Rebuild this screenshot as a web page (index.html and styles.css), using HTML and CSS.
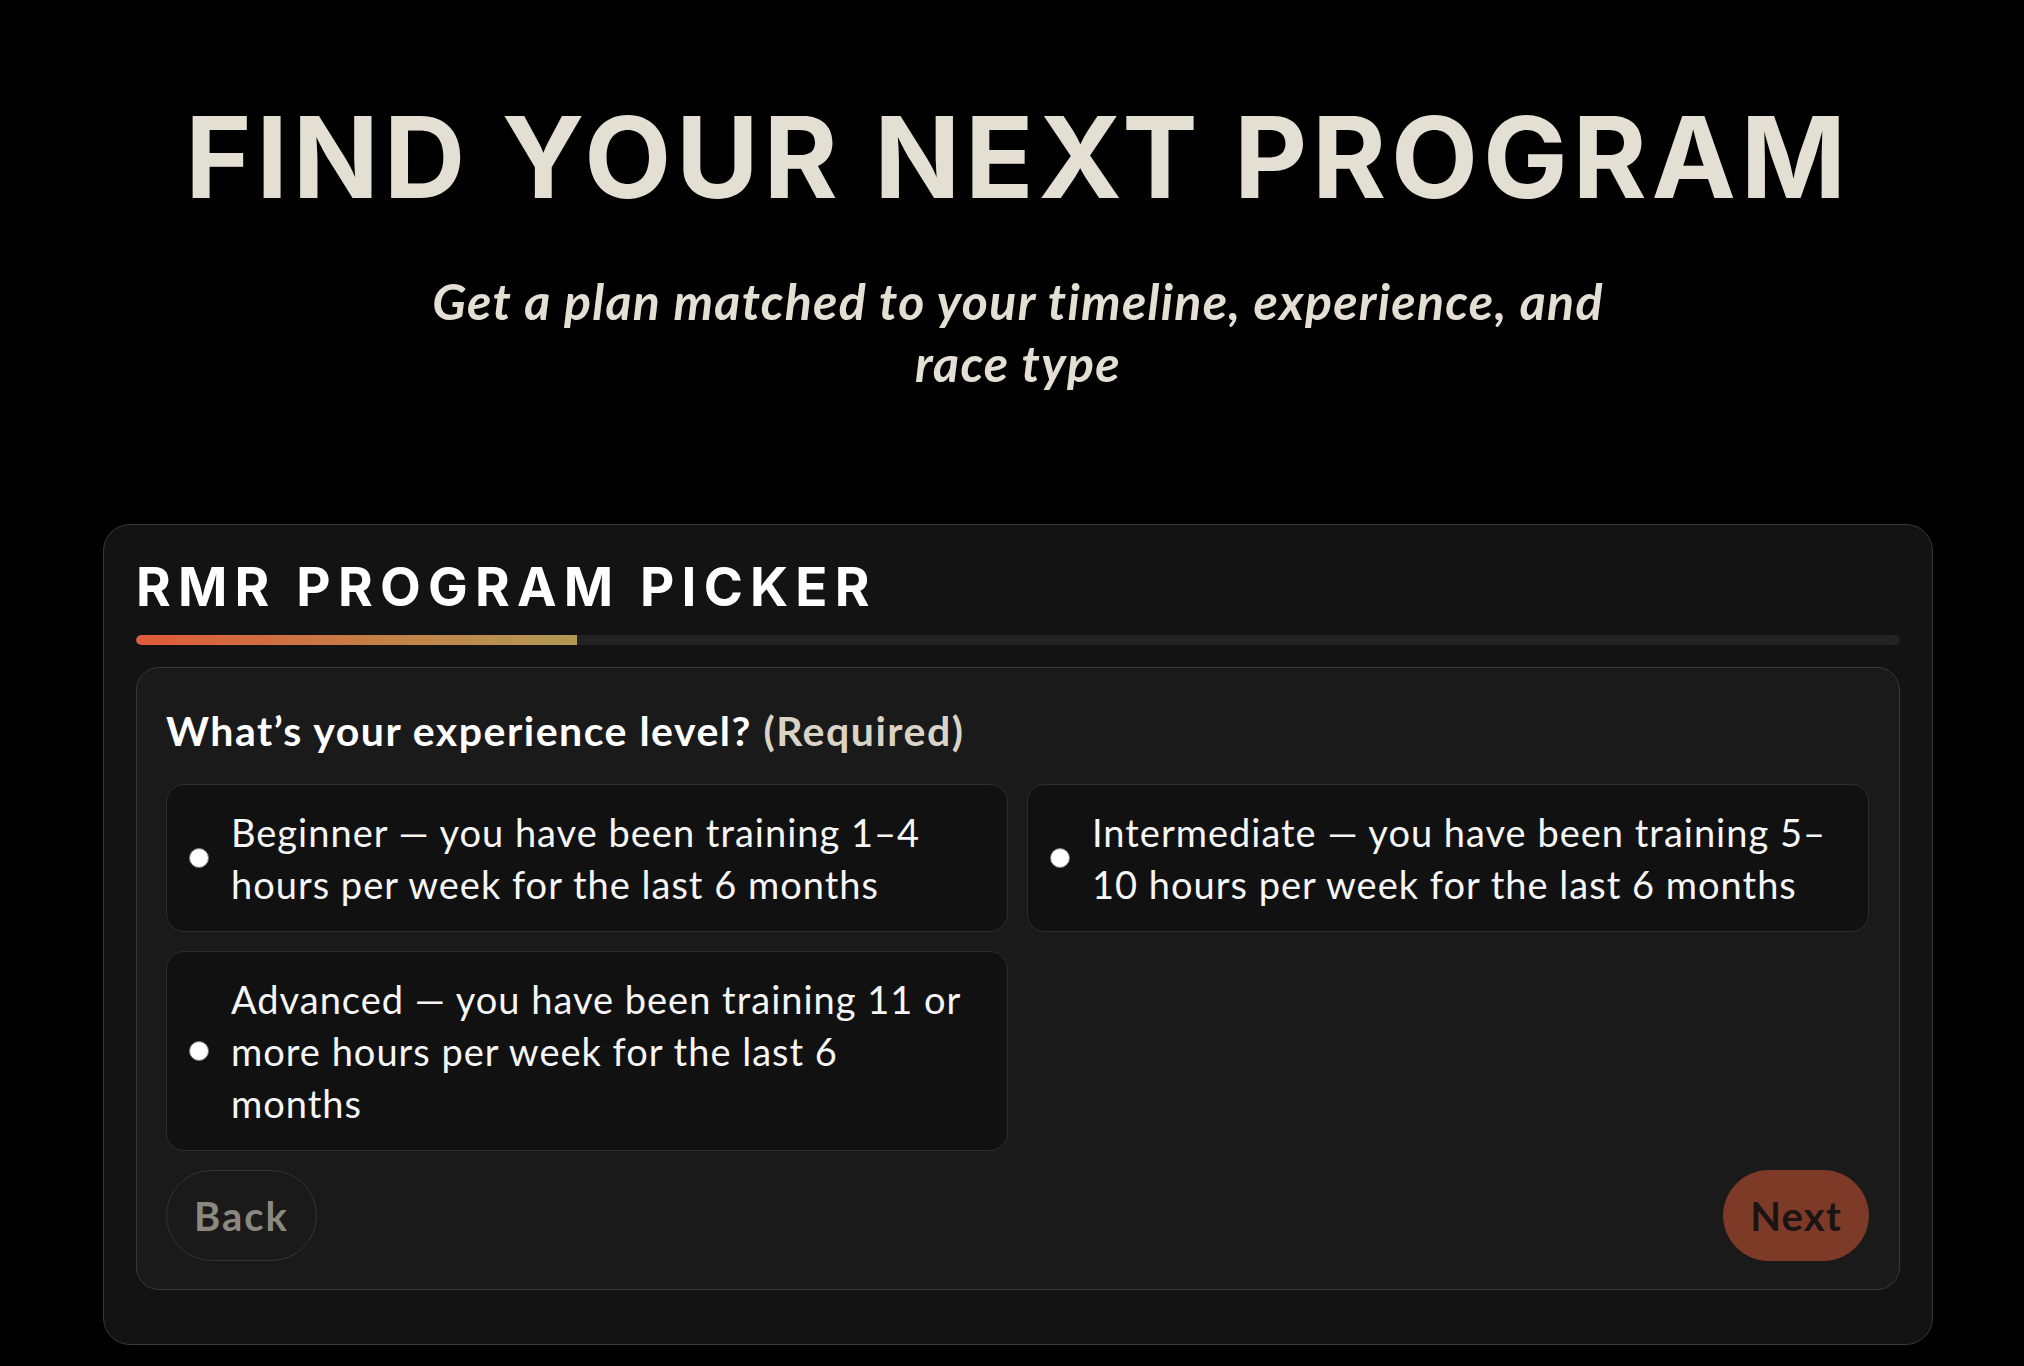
FILE: index.html
```html
<!DOCTYPE html>
<html lang="en">
<head>
<meta charset="utf-8">
<title>Find Your Next Program</title>
<link rel="stylesheet" href="styles.css">
</head>
<body>
<main class="page">
  <h1 class="hero-title">FIND YOUR NEXT PROGRAM</h1>
  <p class="hero-sub">Get a plan matched to your timeline, experience, and race type</p>

  <section class="picker">
    <h2 class="picker-title">RMR PROGRAM PICKER</h2>
    <div class="progress"><div class="progress-fill" style="width:25%"></div></div>

    <form class="step">
      <div class="question">What’s your experience level? <span class="req">(Required)</span></div>
      <div class="options">
        <label class="option">
          <input type="radio" name="experience" class="radio">
          <span class="option-text">Beginner — you have been training 1–4 hours per week for the last 6 months</span>
        </label>
        <label class="option">
          <input type="radio" name="experience" class="radio">
          <span class="option-text">Intermediate — you have been training 5–10 hours per week for the last 6 months</span>
        </label>
        <label class="option">
          <input type="radio" name="experience" class="radio">
          <span class="option-text">Advanced — you have been training 11 or more hours per week for the last 6 months</span>
        </label>
      </div>
      <div class="actions">
        <button type="button" class="btn btn-back">Back</button>
        <button type="button" class="btn btn-next">Next</button>
      </div>
    </form>
  </section>
</main>
</body>
</html>
```

FILE: styles.css
```css
* { box-sizing: border-box; }

html, body {
  margin: 0;
  padding: 0;
  background: #000;
}

body {
  font-family: "Lato", "Noto Sans", sans-serif;
  color: #fff;
}

.page {
  padding: 95px 0 0 12px;
  display: flex;
  flex-direction: column;
  align-items: center;
}

.hero-title {
  margin: 0;
  font-family: "Inter", "Noto Sans", sans-serif;
  font-weight: 700;
  font-size: 113px;
  line-height: 124px;
  letter-spacing: 4.8px;
  color: #e3dfd3;
  text-align: center;
  white-space: nowrap;
}

.hero-sub {
  margin: 51px 0 0;
  max-width: 1210px;
  font-family: "Lato", sans-serif;
  font-style: italic;
  font-weight: 700;
  font-size: 50px;
  line-height: 62px;
  letter-spacing: 1.3px;
  color: #e3dfd3;
  text-align: center;
}

.picker {
  margin-top: 130px;
  width: 1830px;
  background: #141314;
  border: 1px solid #3a3939;
  border-radius: 27px;
  padding: 32px 32px 54px;
}

.picker-title {
  margin: 0;
  font-family: "Inter", "Noto Sans", sans-serif;
  font-weight: 700;
  font-size: 53px;
  line-height: 60px;
  letter-spacing: 7.2px;
  color: #ffffff;
}

.progress {
  margin-top: 18px;
  height: 10px;
  border-radius: 5px;
  background: #232223;
  overflow: hidden;
}

.progress-fill {
  height: 100%;
  border-radius: 5px 0 0 5px;
  background: linear-gradient(90deg, #e05a3a 0%, #c77d45 50%, #b29a52 100%);
}

.step {
  margin-top: 22px;
  background: #1b1a1b;
  border: 1px solid #3a3939;
  border-radius: 23px;
  padding: 37px 30px 28px 29px;
}

.question {
  font-family: "Lato", sans-serif;
  font-weight: 700;
  font-size: 41px;
  line-height: 52px;
  letter-spacing: 1.5px;
  color: #ffffff;
}

.req {
  color: #d9d4c5;
}

.options {
  margin-top: 27px;
  display: grid;
  grid-template-columns: 1fr 1fr;
  gap: 19px;
}

.option {
  display: flex;
  align-items: center;
  gap: 22px;
  background: #111111;
  border: 1px solid #2e2d2d;
  border-radius: 18px;
  padding: 21px 24px 21px 22px;
  cursor: pointer;
}

.radio {
  appearance: none;
  -webkit-appearance: none;
  flex: none;
  width: 20px;
  height: 20px;
  margin: 0;
  border-radius: 50%;
  background: #ffffff;
  border: 1px solid #7a7a7a;
}

.option-text {
  max-width: 740px;
  font-family: "Lato", sans-serif;
  font-weight: 400;
  font-size: 38px;
  line-height: 52px;
  letter-spacing: 1px;
  color: #f6f6f6;
}

.actions {
  margin-top: 19px;
  display: flex;
  justify-content: space-between;
  align-items: center;
}

.btn {
  height: 91px;
  border-radius: 46px;
  padding: 0 27px;
  font-family: "Lato", sans-serif;
  font-weight: 700;
  font-size: 40px;
  letter-spacing: 2px;
  line-height: 48px;
  cursor: pointer;
}

.btn-back {
  background: transparent;
  border: 1px solid #353434;
  color: #8b8880;
}

.btn-next {
  padding: 0 26px;
  letter-spacing: 1.2px;
  background: #7d3a27;
  border: 1px solid #7d3a27;
  color: #1a1514;
}
```
